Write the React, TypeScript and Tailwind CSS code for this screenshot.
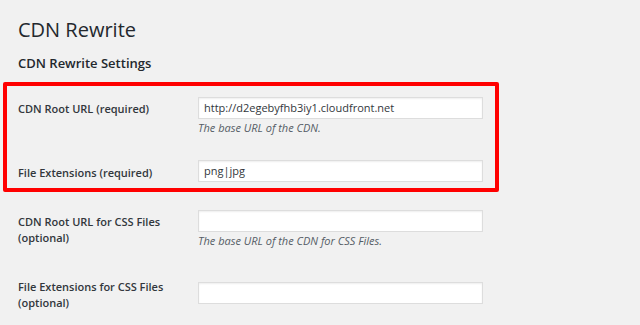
import React from 'react'

const font = { fontFamily: '"Open Sans", "Liberation Sans", sans-serif' }

function TextInput({ value = '' }: { value?: string }) {
  return (
    <div className="w-[285px] h-[22px] bg-white border border-[#dddddd] shadow-[inset_0_1px_2px_rgba(0,0,0,0.07)] px-[5px] flex items-center text-[11px] text-[#32373c]">
      {value}
    </div>
  )
}

function Row({ label, value, desc, labelTop, top }: { label: React.ReactNode; value?: string; desc?: string; labelTop: string; top: string }) {
  return (
    <div className={`flex ${top}`}>
      <div className={`w-[180px] shrink-0 text-[11px] leading-[16px] font-semibold text-[#32373c] ${labelTop}`}>{label}</div>
      <div className="flex flex-col">
        <TextInput value={value} />
        {desc && <p className="mt-[2px] text-[11px] leading-[14px] italic text-[#555d66]">{desc}</p>}
      </div>
    </div>
  )
}

export default function App() {
  return (
    <div className="w-[640px] h-[325px] overflow-hidden bg-[#f1f1f1]" style={font}>
      <h1 className="pl-[18px] pt-[17px] text-[20px] leading-[26px] font-normal text-[#23282d]">CDN Rewrite</h1>
      <h2 className="pl-[18px] mt-[11px] text-[13px] leading-[18px] font-semibold text-[#23282d]">CDN Rewrite Settings</h2>

      {/* highlighted required fields */}
      <div className="ml-[3px] mt-[10px] w-[496px] border-[4px] border-[#ff0000] rounded-[2px] pl-[11px] pt-[11px] pb-[6px]">
        <Row label="CDN Root URL (required)" value="http://d2egebyfhb3iy1.cloudfront.net" desc="The base URL of the CDN." labelTop="pt-[4px]" top="" />
        <Row label="File Extensions (required)" value="png|jpg" labelTop="pt-[5px]" top="mt-[25px]" />
      </div>

      <div className="pl-[18px]">
        <Row label={<>CDN Root URL for CSS Files<br />(optional)</>} desc="The base URL of the CDN for CSS Files." labelTop="pt-[4px]" top="mt-[18px]" />
        <Row label={<>File Extensions for CSS Files<br />(optional)</>} labelTop="-mt-[3px]" top="mt-[34px]" />
      </div>
    </div>
  )
}
